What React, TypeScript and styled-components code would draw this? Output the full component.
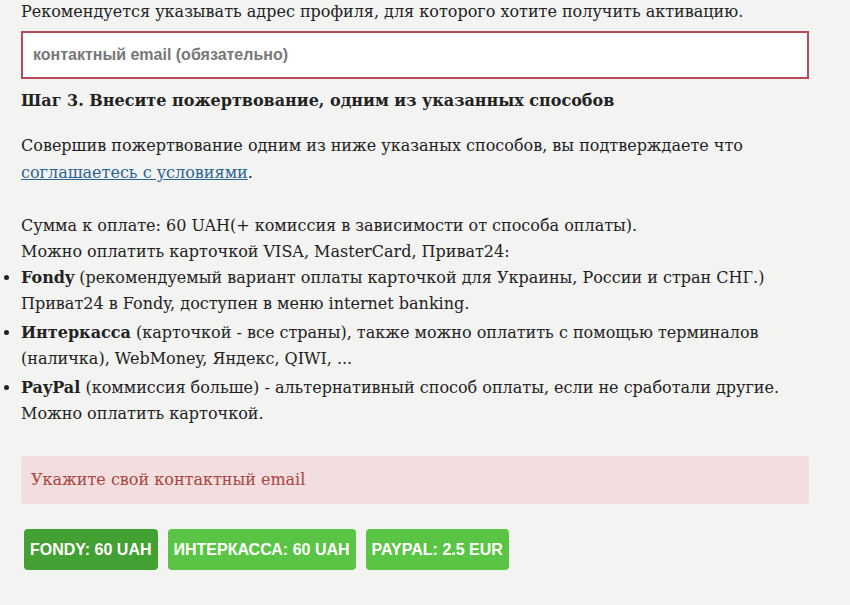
import React from "react";
import styled, { createGlobalStyle } from "styled-components";

const Global = createGlobalStyle`
  html, body { margin: 0; padding: 0; background: #f3f3f2; }
  body { font-family: "DejaVu Serif", "Liberation Serif", serif; color: #222; }
`;

const Page = styled.div`
  width: 788px;
  padding: 0 21px;
  margin-top: -1px;
  font-size: 16px;
  line-height: 26px;
`;

const Text = styled.p<{ $gap?: number; $lh?: number }>`
  margin: 0 0 ${(p) => p.$gap ?? 0}px;
  line-height: ${(p) => p.$lh ?? 26}px;
`;

const EmailInput = styled.input`
  display: block;
  box-sizing: border-box;
  width: 100%;
  height: 48px;
  margin: 6px 0 9px;
  padding: 0 10px;
  border: 2px solid #b94a58;
  background: #fff;
  font-family: "Liberation Sans", Arial, sans-serif;
  font-weight: bold;
  font-size: 16px;
  color: #555;
  outline: none;
  &::placeholder { color: #777; }
`;

const StepTitle = styled.h4`
  margin: 0 0 18px;
  font-size: 16px;
  line-height: 26px;
  font-weight: bold;
`;

const Link = styled.a`
  color: #2a6496;
  text-decoration: underline;
`;

const Methods = styled.ul`
  margin: 0;
  padding: 0;
  list-style: disc outside;
`;

const Method = styled.li`
  margin-bottom: 3px;
`;

const Alert = styled.div`
  margin-top: 29px;
  height: 48px;
  box-sizing: border-box;
  padding: 0 10px;
  display: flex;
  align-items: center;
  background: #f2dede;
  color: #a94442;
  border-radius: 4px;
`;

const Buttons = styled.div`
  display: flex;
  gap: 10px;
  margin: 25px 0 0 3px;
`;

const PayButton = styled.button<{ $active?: boolean }>`
  height: 41px;
  padding: 0 6px;
  border: none;
  border-radius: 4px;
  background: ${(p) => (p.$active ? "#43a032" : "#5ac544")};
  color: #fff;
  font-family: "Liberation Sans", Arial, sans-serif;
  font-weight: bold;
  font-size: 16px;
  text-transform: uppercase;
  cursor: pointer;
`;

export default function App() {
  return (
    <>
      <Global />
      <Page>
        <Text>Рекомендуется указывать адрес профиля, для которого хотите получить активацию.</Text>
        <EmailInput placeholder="контактный email (обязательно)" />
        <StepTitle>Шаг 3. Внесите пожертвование, одним из указанных способов</StepTitle>
        <Text $gap={27} $lh={27}>
          Совершив пожертвование одним из ниже указаных способов, вы подтверждаете что{" "}
          <Link href="#">соглашаетесь с условиями</Link>.
        </Text>
        <Text>
          Сумма к оплате: 60 UAH(+ комиссия в зависимости от способа оплаты).
          <br />
          Можно оплатить карточкой VISA, MasterCard, Приват24:
        </Text>
        <Methods>
          <Method>
            <b>Fondy</b> (рекомендуемый вариант оплаты карточкой для Украины, России и стран СНГ.)
            <br />
            Приват24 в Fondy, доступен в меню internet banking.
          </Method>
          <Method>
            <b>Интеркасса</b> (карточкой - все страны), также можно оплатить с помощью терминалов (наличка),
            WebMoney, Яндекс, QIWI, ...
          </Method>
          <Method>
            <b>PayPal</b> (коммиссия больше) - альтернативный способ оплаты, если не сработали другие. Можно
            оплатить карточкой.
          </Method>
        </Methods>
        <Alert>Укажите свой контактный email</Alert>
        <Buttons>
          <PayButton $active>Fondy: 60 UAH</PayButton>
          <PayButton>Интеркасса: 60 UAH</PayButton>
          <PayButton>PayPal: 2.5 EUR</PayButton>
        </Buttons>
      </Page>
    </>
  );
}
